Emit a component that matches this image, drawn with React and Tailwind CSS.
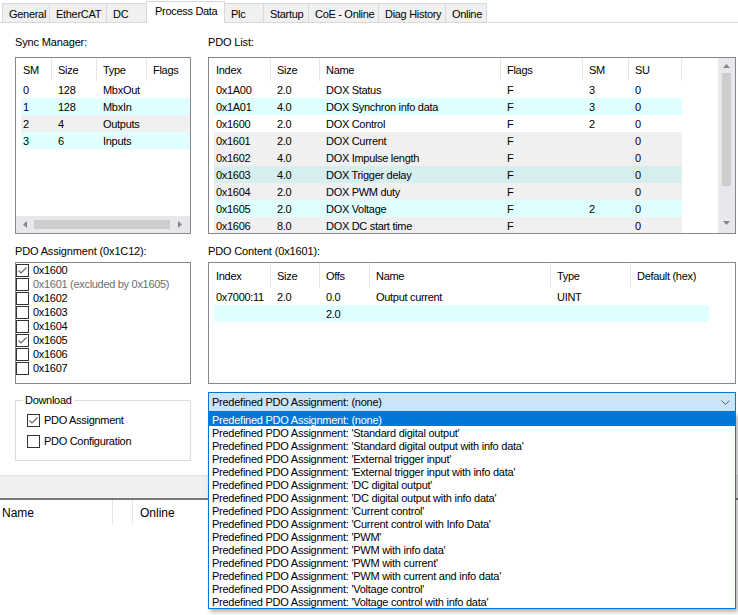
import React from 'react'

const FONT = "font-['Liberation_Sans',Arial,sans-serif]"

const TABS = [
  { name: 'General', w: 'w-[48px]' },
  { name: 'EtherCAT', w: 'w-[58px]' },
  { name: 'DC', w: 'w-[41px]' },
  { name: 'Process Data', w: 'w-[79px]', active: true },
  { name: 'Plc', w: 'w-[40px]' },
  { name: 'Startup', w: 'w-[46px]' },
  { name: 'CoE - Online', w: 'w-[71px]' },
  { name: 'Diag History', w: 'w-[68px]' },
  { name: 'Online', w: 'w-[42px]' },
]

const ROW_BG = {
  white: 'bg-white',
  cyan: 'bg-[#e0ffff]',
  gray: 'bg-[#f0f0f0]',
  teal: 'bg-[#d6eeee]',
}

// --- Sync Manager ---
const SM_COLS = ['w-[31px]', 'w-[45px]', 'w-[50px]', 'w-[60px]']
const SM_HEAD = ['SM', 'Size', 'Type', 'Flags']
const SM_ROWS = [
  [['0', '128', 'MbxOut', ''], 'white'],
  [['1', '128', 'MbxIn', ''], 'cyan'],
  [['2', '4', 'Outputs', ''], 'gray'],
  [['3', '6', 'Inputs', ''], 'cyan'],
]

// --- PDO List ---
const PDO_COLS = ['w-[57px]', 'w-[49px]', 'w-[181px]', 'w-[82px]', 'w-[46px]', 'w-[53px]']
const PDO_HEAD = ['Index', 'Size', 'Name', 'Flags', 'SM', 'SU']
const PDO_ROWS = [
  [['0x1A00', '2.0', 'DOX Status', 'F', '3', '0'], 'white'],
  [['0x1A01', '4.0', 'DOX Synchron info data', 'F', '3', '0'], 'cyan'],
  [['0x1600', '2.0', 'DOX Control', 'F', '2', '0'], 'white'],
  [['0x1601', '2.0', 'DOX Current', 'F', '', '0'], 'gray'],
  [['0x1602', '4.0', 'DOX Impulse length', 'F', '', '0'], 'gray'],
  [['0x1603', '4.0', 'DOX Trigger delay', 'F', '', '0'], 'teal'],
  [['0x1604', '2.0', 'DOX PWM duty', 'F', '', '0'], 'gray'],
  [['0x1605', '2.0', 'DOX Voltage', 'F', '2', '0'], 'cyan'],
  [['0x1606', '8.0', 'DOX DC start time', 'F', '', '0'], 'gray'],
]

// --- PDO Content ---
const CONTENT_COLS = ['w-[57px]', 'w-[49px]', 'w-[50px]', 'w-[181px]', 'w-[80px]', 'w-[78px]']
const CONTENT_HEAD = ['Index', 'Size', 'Offs', 'Name', 'Type', 'Default (hex)']
const CONTENT_ROWS = [
  [['0x7000:11', '2.0', '0.0', 'Output current', 'UINT', ''], 'white'],
  [['', '', '2.0', '', '', ''], 'cyan'],
]

const ASSIGN = [
  { name: '0x1600', checked: true },
  { name: '0x1601 (excluded by 0x1605)', disabled: true },
  { name: '0x1602' },
  { name: '0x1603' },
  { name: '0x1604' },
  { name: '0x1605', checked: true },
  { name: '0x1606' },
  { name: '0x1607' },
]

const PREDEFINED = [
  '(none)',
  "'Standard digital output'",
  "'Standard digital output with info data'",
  "'External trigger input'",
  "'External trigger input with info data'",
  "'DC digital output'",
  "'DC digital output with info data'",
  "'Current control'",
  "'Current control with Info Data'",
  "'PWM'",
  "'PWM with info data'",
  "'PWM with current'",
  "'PWM with current and info data'",
  "'Voltage control'",
  "'Voltage control with info data'",
]

function Check({ checked }) {
  return (
    <div className="w-[13px] h-[13px] shrink-0 border border-[#333333] bg-white flex items-center justify-center">
      {checked && (
        <svg width="11" height="11" viewBox="0 0 11 11">
          <path d="M1.5 5.5 L4 8 L9.5 2.5" stroke="#666666" strokeWidth="1.1" fill="none" />
        </svg>
      )}
    </div>
  )
}

function Arrow({ dir }) {
  const d = {
    up: 'M0 4 L3.5 0 L7 4 Z',
    down: 'M0 0 L7 0 L3.5 4 Z',
    left: 'M4 0 L4 7 L0 3.5 Z',
    right: 'M0 0 L4 3.5 L0 7 Z',
  }[dir]
  const vert = dir === 'up' || dir === 'down'
  return (
    <svg width={vert ? 7 : 4} height={vert ? 4 : 7} viewBox={vert ? '0 0 7 4' : '0 0 4 7'}>
      <path d={d} fill="#868686" />
    </svg>
  )
}

function Header({ labels, cols, h, lastLine = true }) {
  return (
    <div className={`flex pl-[5px] shrink-0 ${h}`}>
      {labels.map((l, i) => (
        <div
          key={i}
          className={`${cols[i]} shrink-0 flex items-center whitespace-nowrap pt-[1px]
            ${i === 0 ? 'pl-[2px]' : 'pl-[6px]'}
            ${i < labels.length - 1 || lastLine ? 'border-r border-[#e5e5e5]' : ''}`}
        >
          {l}
        </div>
      ))}
    </div>
  )
}

function Rows({ rows, cols }) {
  return rows.map(([cells, bg], r) => (
    <div key={r} className={`flex w-fit ml-[5px] h-[17px] items-center pt-[1px] shrink-0 ${ROW_BG[bg]}`}>
      {cells.map((c, i) => (
        <div key={i} className={`${cols[i]} shrink-0 whitespace-nowrap overflow-hidden ${i === 0 ? 'pl-[2px]' : 'pl-[6px]'}`}>
          {c}
        </div>
      ))}
    </div>
  ))
}

function Label({ children }) {
  return <div className="h-[13px] leading-[13px] tracking-[-0.15px] whitespace-nowrap">{children}</div>
}

export default function App() {
  return (
    <div className={`${FONT} text-[11px] leading-[13px] tracking-[-0.3px] text-black bg-white w-[738px] h-[615px] overflow-hidden relative`}>
      {/* tabs */}
      <div className="h-[23px] flex items-end pl-[2px] border-b border-[#d9d9d9]">
        {TABS.map((t) => (
          <div
            key={t.name}
            className={`${t.w} -ml-px first:ml-0 border border-b-0 border-[#d9d9d9] flex items-center pl-[6px] whitespace-nowrap
              ${t.active ? 'h-[22px] bg-white relative z-10 -mb-px pb-[2px] pl-[8px]' : 'h-[19px] bg-[#f0f0f0] pt-[2px]'}`}
          >
            {t.name}
          </div>
        ))}
      </div>

      <div className="flex pl-[15px] gap-[17px]">
        {/* left column */}
        <div className="w-[176px] flex flex-col">
          <div className="mt-[13px]">
            <Label>Sync Manager:</Label>
          </div>
          <div className="mt-[8px] h-[177px] border border-[#828790] flex flex-col overflow-hidden">
            <Header labels={SM_HEAD} cols={SM_COLS} h="h-[23px]" />
            <Rows rows={SM_ROWS} cols={SM_COLS} />
            <div className="flex-1" />
            <div className="h-[17px] bg-[#e8e8ec] flex items-center shrink-0">
              <div className="w-[17px] flex justify-center"><Arrow dir="left" /></div>
              <div className="w-[136px] h-[9px] ml-px bg-[#cdcdcd]" />
              <div className="flex-1 flex justify-center"><Arrow dir="right" /></div>
            </div>
          </div>

          <div className="mt-[11px]">
            <Label>PDO Assignment (0x1C12):</Label>
          </div>
          <div className="mt-[4px] h-[122px] border border-[#828790] flex flex-col">
            {ASSIGN.map((a) => (
              <div key={a.name} className="h-[14px] flex items-center gap-[4px]">
                <Check checked={a.checked} />
                <span className={`whitespace-nowrap pt-[1px] ${a.disabled ? 'text-[#6d6d6d]' : ''}`}>{a.name}</span>
              </div>
            ))}
          </div>

          <div className="mt-[16px] h-[61px] border border-[#dcdcdc] relative flex flex-col pl-[11px] pt-[13px] gap-[8px]">
            <div className="absolute -top-[7px] left-[7px] bg-white px-[2px]">Download</div>
            <div className="flex items-center gap-[4px]">
              <Check checked />
              <span>PDO Assignment</span>
            </div>
            <div className="flex items-center gap-[4px]">
              <Check />
              <span>PDO Configuration</span>
            </div>
          </div>
        </div>

        {/* right column */}
        <div className="w-[528px] flex flex-col">
          <div className="mt-[13px]">
            <Label>PDO List:</Label>
          </div>
          <div className="mt-[8px] h-[177px] border border-[#828790] flex overflow-hidden">
            <div className="flex-1 min-w-0 flex flex-col overflow-hidden">
              <Header labels={PDO_HEAD} cols={PDO_COLS} h="h-[23px]" />
              <Rows rows={PDO_ROWS} cols={PDO_COLS} />
            </div>
            <div className="w-[17px] bg-[#e8e8ec] flex flex-col items-center shrink-0">
              <div className="h-[15px] flex items-center"><Arrow dir="up" /></div>
              <div className="w-[9px] h-[113px] bg-[#cdcdcd]" />
              <div className="flex-1" />
              <div className="h-[20px] flex items-center"><Arrow dir="down" /></div>
            </div>
          </div>

          <div className="mt-[11px]">
            <Label>PDO Content (0x1601):</Label>
          </div>
          <div className="mt-[4px] h-[122px] border border-[#828790] flex flex-col overflow-hidden">
            <Header labels={CONTENT_HEAD} cols={CONTENT_COLS} h="h-[25px]" lastLine={false} />
            <Rows rows={CONTENT_ROWS} cols={CONTENT_COLS} />
          </div>

          {/* predefined assignment combo with open list */}
          <div className="mt-[8px] relative h-[20px]">
            <div className="h-[20px] border border-[#0078d7] bg-[#cce4f7] flex items-center justify-between pl-[3px] pr-[5px]">
              <span className="tracking-[-0.25px] whitespace-nowrap pt-[1px]">Predefined PDO Assignment: (none)</span>
              <svg width="9" height="5" viewBox="0 0 9 5">
                <path d="M0.5 0.5 L4.5 4.5 L8.5 0.5" stroke="#5f5f5f" strokeWidth="1" fill="none" />
              </svg>
            </div>
            <div className="absolute left-0 top-[20px] w-[528px] h-[197px] border border-[#0078d7] bg-white z-20 shadow-[2px_3px_4px_rgba(0,0,0,0.3)]">
              {PREDEFINED.map((p, i) => (
                <div
                  key={p}
                  className={`h-[13px] leading-[15px] pl-[3px] tracking-[-0.25px] whitespace-nowrap
                    ${i === 0 ? 'bg-[#0078d7] text-white' : ''}`}
                >
                  Predefined PDO Assignment: {p}
                </div>
              ))}
            </div>
          </div>
        </div>
      </div>

      {/* lower panel */}
      <div className="mt-[14px] h-[25px] bg-[#f0f0f0] border-t border-[#e3e3e3] border-b-2 border-b-[#7a7a7a]" />
      <div className="h-[24px] flex text-[12px] tracking-[0px]">
        <div className="w-[113px] pl-[2px] pt-[2px] flex items-center border-r border-[#e5e5e5]">Name</div>
        <div className="w-[20px] border-r border-[#e5e5e5]" />
        <div className="pl-[7px] pt-[2px] flex items-center">Online</div>
      </div>
    </div>
  )
}
